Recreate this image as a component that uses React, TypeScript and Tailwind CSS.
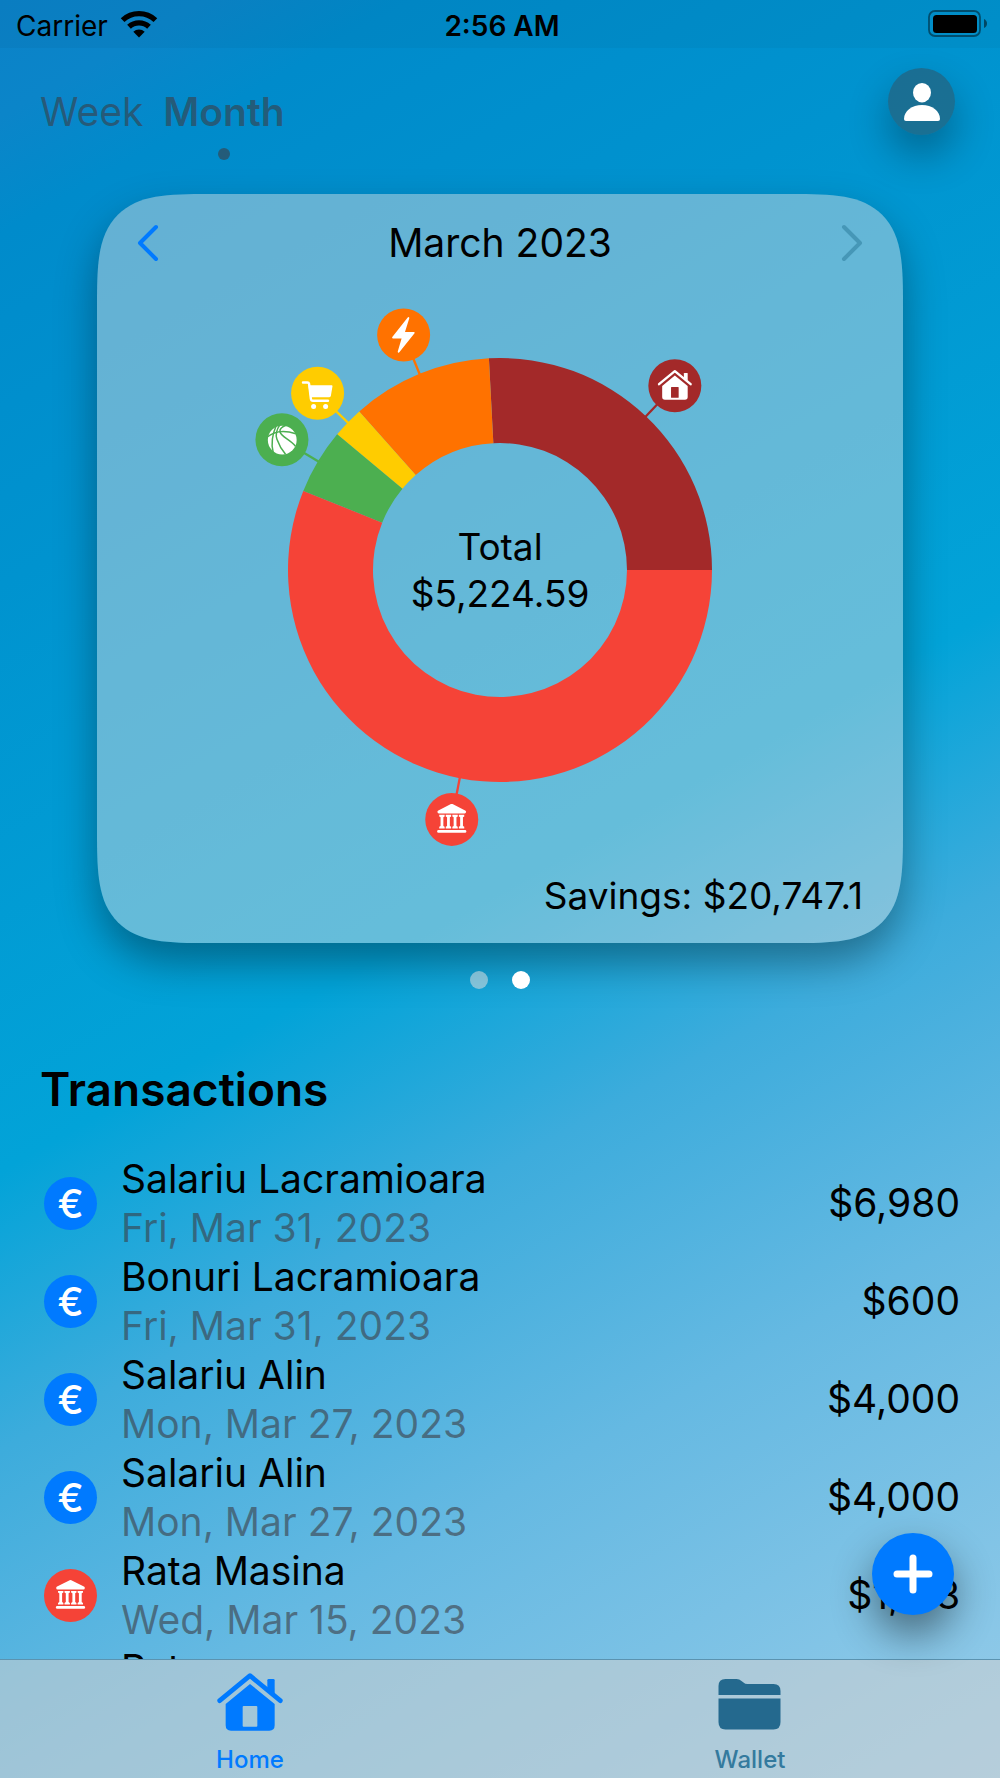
import React from 'react';

type Category = 'house' | 'bank' | 'sport' | 'cart' | 'energy' | 'income';

type Segment = {
  category: Category;
  color: string;
  from: number;
  to: number;
};

type Transaction = {
  id: number;
  title: string;
  date: string;
  amount: string;
  category: Category;
};

// Angles are in degrees, counter-clockwise from 3 o'clock
const segments: Segment[] = [
  { category: 'house', color: '#a32929', from: 0, to: 93 },
  { category: 'energy', color: '#ff7200', from: 93, to: 131.6 },
  { category: 'cart', color: '#ffcc00', from: 131.6, to: 140.2 },
  { category: 'sport', color: '#4caf50', from: 140.2, to: 158.1 },
  { category: 'bank', color: '#f54337', from: 158.1, to: 360 },
];

const transactions: Transaction[] = [
  { id: 1, title: 'Salariu Lacramioara', date: 'Fri, Mar 31, 2023', amount: '$6,980', category: 'income' },
  { id: 2, title: 'Bonuri Lacramioara', date: 'Fri, Mar 31, 2023', amount: '$600', category: 'income' },
  { id: 3, title: 'Salariu Alin', date: 'Mon, Mar 27, 2023', amount: '$4,000', category: 'income' },
  { id: 4, title: 'Salariu Alin', date: 'Mon, Mar 27, 2023', amount: '$4,000', category: 'income' },
  { id: 5, title: 'Rata Masina', date: 'Wed, Mar 15, 2023', amount: '$1,133', category: 'bank' },
];

const HouseShape: React.FC = () => (
  <>
    <path d="M7 83 98 8l91 75" fill="none" stroke="currentColor" strokeWidth="14" strokeLinecap="round" strokeLinejoin="round" />
    <path d="M150 46V22q0-4 4-4h14q4 0 4 4v42z" fill="currentColor" />
    <path
      d="M98 33 172 93v64q0 16-16 16H41q-16 0-16-16V93zM79 99q-3 0-3 3v56q0 3 3 3h38q3 0 3-3v-56q0-3-3-3z"
      fill="currentColor"
      fillRule="evenodd"
    />
  </>
);

// Category glyphs are drawn around the origin of a 53px badge
const CategoryGlyph: React.FC<{ category: Category; background: string }> = ({ category, background }) => {
  switch (category) {
    case 'house':
      return (
        <g transform="translate(-17 -16) scale(0.1735)" color="#fff">
          <HouseShape />
        </g>
      );
    case 'energy':
      return (
        <path
          d="M4.8-17 .2-2.2h10L-5 16.8-.8 2.6h-9.8z"
          fill="#fff"
          stroke="#fff"
          strokeWidth="1.8"
          strokeLinejoin="round"
        />
      );
    case 'cart':
      return (
        <g fill="none" stroke="#fff" strokeLinecap="round" strokeLinejoin="round">
          <path d="M-14.6-10.8h4.4q1.4 0 1.7 1.4L-6.7 5.6q.3 1.9 2 1.9H10.4" strokeWidth="2.4" />
          <path d="M-8.4-7.2H14.2L12.6 2.4q-.2 1-1.3 1H-6.8z" fill="#fff" strokeWidth="1.4" />
          <circle cx="-4" cy="13.3" r="2.5" fill="#fff" stroke="none" />
          <circle cx="8" cy="13.3" r="2.5" fill="#fff" stroke="none" />
        </g>
      );
    case 'sport':
      return (
        <g>
          <circle cx="0.3" cy="0.3" r="14.4" fill="#fff" />
          <g fill="none" stroke={background} strokeWidth="1.5">
            <path d="M-15-2.5Q-4-12 14-6" />
            <path d="M-5.6-14.5Q-12 0-8.8 12.5" />
            <path d="M-1.8-15.4Q-7.5-7-5-.5-2 8 3.6 14.6" />
            <path d="M4-14.5Q-2.500-12-2-8C-.5-2.5 8-.5 13.500 6.5" />
          </g>
        </g>
      );
    case 'bank':
      return (
        <g fill="#fff">
          <path d="M-.8-15.3q.8-.4 1.6 0L13.4-9q.9.5.9 1.4 0 1.6-1.4 1.6h-25.8q-1.4 0-1.4-1.6 0-.9.9-1.4z" />
          {[-9.8, -3.3, 3.3, 9.8].map((x) => (
            <path key={x} d={`M${x - 2.7}-4.6h5.4v1.6l-1.3.8v8.8l1.3.8v1.6h-5.4v-1.6l1.3-.8v-8.8l-1.3-.8z`} />
          ))}
          <rect x="-14.6" y="10.6" width="29.2" height="2.7" rx="1.3" />
        </g>
      );
    default:
      return null;
  }
};

const CHART_CENTER = 278;
const OUTER_RADIUS = 212;
const INNER_RADIUS = 127;
const BADGE_DISTANCE = 254;

const pointAt = (radius: number, degrees: number) => {
  const angle = (degrees * Math.PI) / 180;
  return {
    x: CHART_CENTER + radius * Math.cos(angle),
    y: CHART_CENTER - radius * Math.sin(angle),
  };
};

const segmentPath = ({ from, to }: Segment) => {
  const a = pointAt(OUTER_RADIUS, from);
  const b = pointAt(OUTER_RADIUS, to);
  const c = pointAt(INNER_RADIUS, to);
  const d = pointAt(INNER_RADIUS, from);
  const large = to - from > 180 ? 1 : 0;
  return `M${a.x} ${a.y}A${OUTER_RADIUS} ${OUTER_RADIUS} 0 ${large} 0 ${b.x} ${b.y}L${c.x} ${c.y}A${INNER_RADIUS} ${INNER_RADIUS} 0 ${large} 1 ${d.x} ${d.y}Z`;
};

const SpendingChart: React.FC = () => (
  <div className="relative mx-auto size-[556px]">
    <svg viewBox="0 0 556 556" className="size-full" role="img" aria-label="Spending by category">
      {segments.map((segment) => {
        const middle = (segment.from + segment.to) / 2;
        const start = pointAt(OUTER_RADIUS - 2, middle);
        const badge = pointAt(BADGE_DISTANCE, middle);
        return (
          <g key={segment.category}>
            <path d={segmentPath(segment)} fill={segment.color} />
            <line x1={start.x} y1={start.y} x2={badge.x} y2={badge.y} stroke={segment.color} strokeWidth="2.3" />
            <g transform={`translate(${badge.x} ${badge.y})`}>
              <circle r="26.5" fill={segment.color} />
              <CategoryGlyph category={segment.category} background={segment.color} />
            </g>
          </g>
        );
      })}
    </svg>
    <div className="absolute inset-0 flex flex-col items-center justify-center text-[37px] leading-[47px]">
      <span>Total</span>
      <span>$5,224.59</span>
    </div>
  </div>
);

const StatusBar: React.FC = () => (
  <div className="grid h-12 shrink-0 grid-cols-3 items-center bg-black/3 pr-3 pl-4 pt-1 text-[28px] leading-9">
    <div className="flex items-center gap-3">
      <span>Carrier</span>
      <svg viewBox="0 0 38 28" className="mb-1 h-7 w-[38px]" aria-hidden="true">
        <g fill="none" stroke="currentColor" strokeWidth="5.4">
          <path d="M2.6 10.1A24 24 0 0 1 35.4 10.1" />
          <path d="M9 16.8A14.7 14.7 0 0 1 29 16.8" />
        </g>
        <path d="M19 27.5 13.3 21.8A8.2 8.2 0 0 1 24.7 21.8Z" fill="currentColor" />
      </svg>
    </div>
    <span className="text-center font-semibold">2:56 AM</span>
    <svg viewBox="0 0 60 28" className="mb-1 h-7 w-[60px] justify-self-end" aria-hidden="true">
      <rect x="1" y="1" width="51" height="25" rx="6" fill="none" stroke="#000" strokeOpacity="0.45" strokeWidth="1.8" />
      <rect x="5" y="5" width="44" height="18" rx="3.5" />
      <path d="M56 9q3 1.500 3 4.500T56 18z" fillOpacity="0.5" />
    </svg>
  </div>
);

const Header: React.FC = () => (
  <header className="flex items-start justify-between pt-5 pr-[45px] pl-10 text-[39px] leading-[48px] text-[#3c3c43]/60">
    <div className="flex gap-5 pt-5">
      <button type="button" className="self-start">
        Week
      </button>
      <button type="button" className="flex flex-col items-center gap-3 font-semibold">
        Month
        <span className="size-3 rounded-full bg-[#3c3c43]/60" />
      </button>
    </div>
    <button
      type="button"
      aria-label="Profile"
      className="flex size-[67px] items-center justify-center rounded-full bg-[#39424a]/45 shadow-[0_20px_40px_rgba(0,0,0,0.3)]"
    >
      <svg viewBox="0 0 36 38" className="h-[38px] w-9" fill="#fff" aria-hidden="true">
        <ellipse cx="18" cy="9.7" rx="9" ry="9.7" />
        <path d="M0 36C0 28 8 22 18 22s18 6 18 14q0 2-2 2H2q-2 0-2-2z" />
      </svg>
    </button>
  </header>
);

const MonthCard: React.FC = () => (
  <section className="mx-[97px] mt-[34px] rounded-[76px] bg-[#dedede]/45 shadow-[0_20px_40px_rgba(0,0,0,0.35)] supports-[corner-shape:squircle]:rounded-[112px] supports-[corner-shape:squircle]:[corner-shape:superellipse(1.75)]">
    <div className="flex h-[98px] items-center justify-between px-10">
      <button type="button" aria-label="Previous month" className="text-[#007aff]">
        <svg viewBox="0 0 22 38" className="h-[38px] w-[22px]" fill="none" stroke="currentColor" strokeWidth="4" strokeLinecap="round" strokeLinejoin="round">
          <path d="M19 3 3 19l16 16" />
        </svg>
      </button>
      <h1 className="text-[39px] leading-[48px]">March 2023</h1>
      <button type="button" aria-label="Next month" disabled className="text-[#4697b7]">
        <svg viewBox="0 0 22 38" className="h-[38px] w-[22px]" fill="none" stroke="currentColor" strokeWidth="4" strokeLinecap="round" strokeLinejoin="round">
          <path d="m3 3 16 16L3 35" />
        </svg>
      </button>
    </div>
    <SpendingChart />
    <p className="pt-6 pr-10 pb-6 text-right text-[37px] leading-[47px]">Savings: $20,747.1</p>
  </section>
);

const TransactionRow: React.FC<{ transaction: Transaction }> = ({ transaction }) => (
  <li className="flex h-[98px] items-center">
    {transaction.category === 'income' ? (
      <span className="flex size-[53px] items-center justify-center rounded-full bg-[#007aff] text-[39px] leading-none font-medium text-white">
        €
      </span>
    ) : (
      <svg viewBox="-26.5 -26.5 53 53" className="size-[53px]" aria-hidden="true">
        <circle r="26.5" fill="#f54337" />
        <CategoryGlyph category={transaction.category} background="#f54337" />
      </svg>
    )}
    <div className="ml-6 flex-1 leading-[49px]">
      <p>{transaction.title}</p>
      <p className="text-[#3c3c43]/60">{transaction.date}</p>
    </div>
    <span>{transaction.amount}</span>
  </li>
);

const TabBar: React.FC = () => (
  <nav className="grid shrink-0 grid-cols-2 border-t border-[#5b93b0] bg-[#cfcfcf]/55 pt-[13px] pb-1 text-[24px] leading-7 font-medium">
    <a href="#home" className="flex flex-col items-center gap-[15px] text-[#007aff]">
      <svg viewBox="0 0 196 174" className="h-[58px] w-[66px]" aria-hidden="true">
        <HouseShape />
      </svg>
      Home
    </a>
    <a href="#wallet" className="flex flex-col items-center gap-[15px] text-[#347a9e]">
      <svg viewBox="0 0 64 58" className="h-[58px] w-16" fill="#24698e" aria-hidden="true">
        <path d="M.5 22v-9q0-7 7-7h11q3 0 5 2l2 1.5q1.5 1.5 4 1.5h26q7 0 7 7v4z" />
        <path d="M.5 25.5h62V49q0 7.5-7 7.5h-48q-7 0-7-7.5z" />
      </svg>
      Wallet
    </a>
  </nav>
);

export default function App() {
  return (
    <div
      className="flex h-screen flex-col overflow-hidden bg-[linear-gradient(150.6deg,#0b82c8_0%,#0b85c9_5%,#008bcb_10%,#0093cf_25%,#02a3d8_50%,#3dacdc_62%,#65b9e2_76%,#97cce9_100%)] font-[Inter,'Liberation_Sans',sans-serif] text-black"
    >
      <StatusBar />
      <main className="relative min-h-0 flex-1">
        <div className="h-full overflow-hidden">
          <Header />
          <MonthCard />
          <div className="mt-7 flex justify-center gap-6">
            <button type="button" aria-label="Page 1" className="size-[18px] rounded-full bg-[#dedede]/55" />
            <button type="button" aria-label="Page 2" aria-current="page" className="size-[18px] rounded-full bg-white" />
          </div>
          <section className="mt-[71px] pr-10 pl-11">
            <h2 className="-ml-1 text-[46px] leading-[58px] font-semibold">Transactions</h2>
            <ul className="mt-9 text-[39px]">
              {transactions.map((transaction) => (
                <TransactionRow key={transaction.id} transaction={transaction} />
              ))}
              {/* next row starts under the tab bar */}
              <li className="ml-[77px] leading-[49px]">Rata</li>
            </ul>
          </section>
        </div>
        <button
          type="button"
          aria-label="Add transaction"
          className="absolute right-[46px] bottom-11 flex size-[82px] items-center justify-center rounded-full bg-[#007aff] shadow-[0_20px_40px_rgba(0,0,0,0.45)]"
        >
          <svg viewBox="0 0 40 40" className="size-10" stroke="#fff" strokeWidth="7" strokeLinecap="round" aria-hidden="true">
            <path d="M20 4v32M4 20h32" />
          </svg>
        </button>
      </main>
      <TabBar />
    </div>
  );
}
